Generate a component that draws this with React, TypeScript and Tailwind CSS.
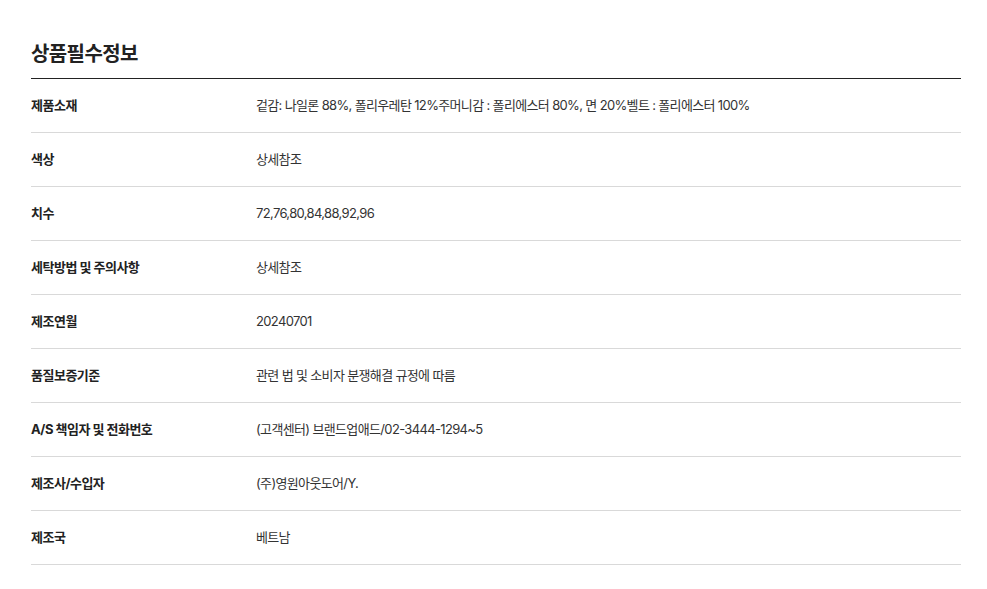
const rows: [string, string][] = [
  ["제품소재", "겉감: 나일론 88%, 폴리우레탄 12%주머니감 : 폴리에스터 80%, 면 20%벨트 : 폴리에스터 100%"],
  ["색상", "상세참조"],
  ["치수", "72,76,80,84,88,92,96"],
  ["세탁방법 및 주의사항", "상세참조"],
  ["제조연월", "20240701"],
  ["품질보증기준", "관련 법 및 소비자 분쟁해결 규정에 따름"],
  ["A/S 책임자 및 전화번호", "(고객센터) 브랜드업애드/02-3444-1294~5"],
  ["제조사/수입자", "(주)영원아웃도어/Y."],
  ["제조국", "베트남"],
];

export default function App() {
  return (
    <div
      className="min-h-[589px] bg-white px-[31px] pt-[39px] text-[#222]"
      style={{ fontFamily: "Inter, 'Noto Sans CJK KR', sans-serif" }}
    >
      <div className="w-[930px]">
        <h2 className="mb-[9px] text-[20px] font-bold leading-[30px] tracking-[-0.6px] text-[#222]">
          상품필수정보
        </h2>
        <div className="border-t border-[#222]">
          {rows.map(([label, value]) => (
            <div key={label} className="flex h-[54px] items-center border-b border-[#d9d9d9] text-[13px]">
              <div className="w-[225px] shrink-0 font-bold tracking-[-0.5px] text-[#222]">{label}</div>
              <div className="tracking-[-0.65px] text-[#333]">{value}</div>
            </div>
          ))}
        </div>
      </div>
    </div>
  );
}
